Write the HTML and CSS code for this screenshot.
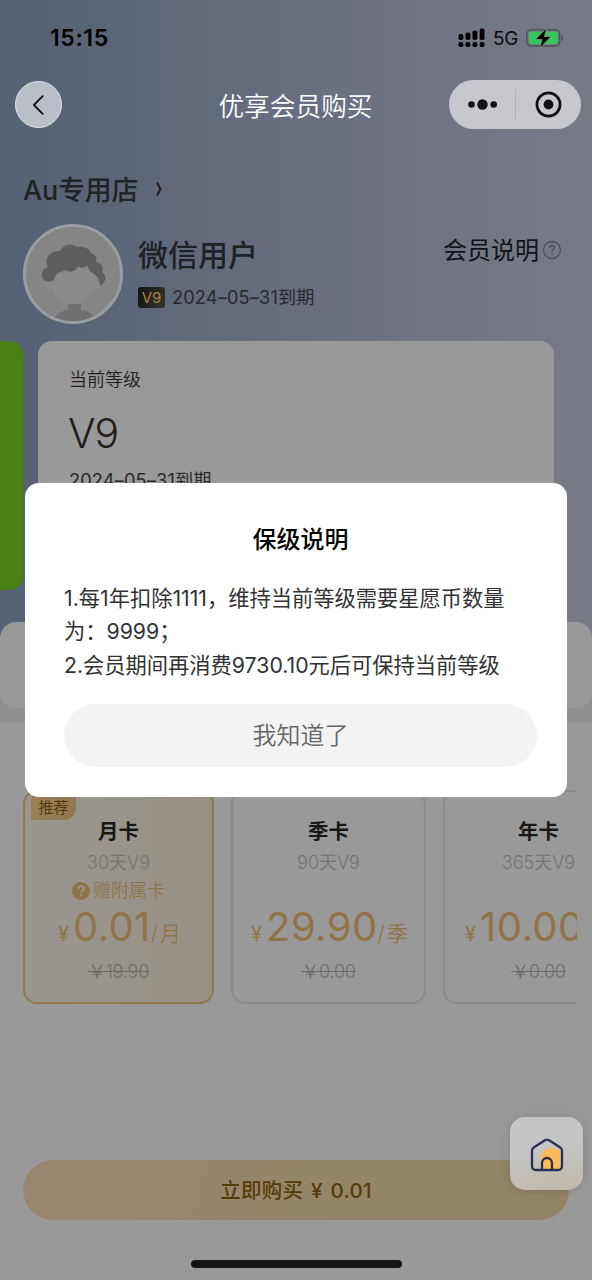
FILE: index.html
```
<!DOCTYPE html>
<html lang="zh-CN">
<head>
<meta charset="utf-8">
<title>优享会员购买</title>
<link rel="stylesheet" href="styles.css">
</head>
<body>
<div class="page">
  <div class="hero">
    <div class="status">
      <span class="clock">15:15</span>
      <div class="status-right">
        <svg class="signal" width="28" height="20" viewBox="0 0 28 20">
          <g fill="#000"><rect x="0.500" y="6" width="4.800" height="6" rx="1.8"/><rect x="7.500" y="4.500" width="4.800" height="7.500" rx="1.8"/><rect x="14.500" y="2.500" width="4.800" height="9.500" rx="1.8"/><rect x="21.700" y="0.500" width="4.800" height="11.500" rx="1.8"/><rect x="0.500" y="14" width="4.800" height="5" rx="1.8"/><rect x="7.500" y="14" width="4.800" height="5" rx="1.8"/><rect x="14.500" y="14" width="4.800" height="5" rx="1.8"/><rect x="21.700" y="14" width="4.800" height="5" rx="1.8"/></g>
        </svg>
        <span class="net">5G</span>
        <svg class="battery" width="38" height="20" viewBox="0 0 38 20">
          <rect x="0.800" y="1.700" width="32.800" height="16.300" rx="4.500" fill="none" stroke="#4e525b" stroke-width="1.500"/>
          <rect x="2.800" y="3.700" width="28.800" height="12.300" rx="2.800" fill="#35c759"/>
          <path d="M35.300 7v6c1.200-.6 2-1.500 2-3s-.8-2.400-2-3z" fill="#4e525b"/>
          <path d="M20 1 10.500 11h6.200l-2.300 8L24 9h-6.200z" fill="#000" stroke="#6c8f76" stroke-width="1.800" paint-order="stroke" stroke-linejoin="round"/>
        </svg>
      </div>
    </div>
    <div class="nav">
      <div class="back"><svg width="46" height="46" viewBox="0 0 46 46"><path d="M27.300 14 18.300 23l9 9" fill="none" stroke="#111" stroke-width="1.900" stroke-linecap="round" stroke-linejoin="round"/></svg></div>
      <div class="title">优享会员购买</div>
      <div class="capsule">
        <svg width="132" height="49" viewBox="0 0 132 49"><g fill="#111"><circle cx="22.500" cy="24.500" r="3.300"/><circle cx="33.500" cy="24.500" r="5.200"/><circle cx="44.700" cy="24.500" r="3.300"/><circle cx="99.500" cy="24.500" r="4.900"/></g><circle cx="99.500" cy="24.500" r="11.600" fill="none" stroke="#111" stroke-width="2.700"/><path d="M66.500 9.500v30" stroke="#aeb0b5"/></svg>
      </div>
    </div>
    <div class="shop"><span>Au专用店</span><svg width="10" height="18" viewBox="0 0 10 18"><path d="M3 2.500Q5 6 6.300 9 5 12 3 15.500" fill="none" stroke="#222" stroke-width="2.100"/></svg></div>
    <div class="user">
      <svg class="avatar" width="100" height="100" viewBox="0 0 100 100">
        <defs><clipPath id="face"><circle cx="50" cy="50" r="47"/></clipPath></defs>
        <circle cx="50" cy="50" r="48.500" fill="#858585" stroke="#9a9da2" stroke-width="3"/>
        <g clip-path="url(#face)">
          <path d="M30 99c2-9 8-12 15-13v-6h13v6c7 1 14 4 16 13z" fill="#707070"/>
          <circle cx="27.500" cy="61" r="4" fill="#8b8b8b"/><circle cx="73" cy="61" r="4" fill="#8b8b8b"/>
          <path d="M29 50h14l20-12 10 12v9c-1 12-10 21-22.500 21S30 71 29 59z" fill="#8b8b8b"/>
          <path d="M31 56c-3 3-9 2-11-1-3-5 0-11 5-12-5-8 2-17 12-16 3-7 12-8 17-4 6-1 12 1 14 6 5 2 6 5 5 9 6 1 8 6 6 10 5 4 4 9 0 12l-2 2c0-7-3-10-6-12-4-2-6-5-7-9-2 3-6 4-9 1-2 6-9 7-12 4-3 1-7 2-9 4-2 2-3 4-3 6z" fill="#5e5e5e"/>
        </g>
      </svg>
      <div class="user-main">
        <div class="name">微信用户</div>
        <div class="expiry"><span class="tag">V9</span><span class="date">2024–05–31到期</span></div>
      </div>
      <div class="explain"><span>会员说明</span><svg width="20" height="20" viewBox="0 0 20 20"><g fill="none" stroke="#4d505a" stroke-width="1.300"><circle cx="10" cy="10" r="8.500"/><path d="M7.500 8.100c0-3.500 5-3.400 5-.5 0 2-2.500 2-2.500 4.200" stroke-width="1.500"/></g><circle cx="10" cy="14" r="0.900" fill="#4d505a"/></svg></div>
    </div>
    <div class="levels">
      <div class="level-prev"></div>
      <div class="level">
        <div class="level-label">当前等级</div>
        <div class="level-name">V9</div>
        <div class="date level-date">2024–05–31到期</div>
      </div>
    </div>
  </div>
  <div class="band"><div class="panel"></div></div>
  <div class="plans">
    <div class="plan active">
      <span class="rec">推荐</span>
      <div class="plan-name">月卡</div>
      <div class="plan-days">30天V9</div>
      <div class="gift"><svg width="18" height="18" viewBox="0 0 18 18"><circle cx="9" cy="9" r="9" fill="#8f7448"/><path d="M6.300 7c0-4 5.600-3.700 5.600-.4 0 2-2.700 2-2.700 4.300" fill="none" stroke="#9d988d" stroke-width="1.700"/><circle cx="9.200" cy="13.300" r="1.100" fill="#9d988d"/></svg>赠附属卡</div>
      <div class="price"><span class="yen">¥</span><span class="num">0.01</span><span class="unit">/月</span></div>
      <div class="was">￥19.90</div>
    </div>
    <div class="plan">
      <div class="plan-name">季卡</div>
      <div class="plan-days">90天V9</div>
      <div class="gift"></div>
      <div class="price"><span class="yen">¥</span><span class="num">29.90</span><span class="unit">/季</span></div>
      <div class="was">￥0.00</div>
    </div>
    <div class="plan">
      <div class="plan-name">年卡</div>
      <div class="plan-days">365天V9</div>
      <div class="gift"></div>
      <div class="price"><span class="yen">¥</span><span class="num">10.00</span><span class="unit">/年</span></div>
      <div class="was">￥0.00</div>
    </div>
  </div>
  <div class="buy">立即购买 ¥ 0.01</div>
  <div class="home-bar"></div>

  <div class="modal">
    <div class="modal-title">保级说明</div>
    <div class="modal-text">
      <div class="l1">1.每1年扣除1111，维持当前等级需要星愿币数量</div>
      <div class="l2">为：9999；</div>
      <div class="l3">2.会员期间再消费9730.10元后可保持当前等级</div>
    </div>
    <div class="ok">我知道了</div>
  </div>
  <div class="home">
    <svg width="36" height="38" viewBox="0 0 36 38"><path d="M12 24c-1-7 4-11 10-11 4 0 6.500 1 9 3V34H14z" fill="#fdb95d"/><path d="M3 15.500Q3 13.500 5 12.200L16 5.200q2-1.300 4 0l11 7q2 1.300 2 3.300V31q0 4-4 4H7q-4 0-4-4zM13 35v-7a5 5 0 0 1 10 0v7" fill="none" stroke="#26324f" stroke-width="2.300" stroke-linejoin="round"/></svg>
  </div>
</div>
</body>
</html>
```
FILE: styles.css
```
* { box-sizing: border-box; }
body { margin: 0; font-family: Inter, "Noto Sans CJK SC", sans-serif; }
.page { position: relative; width: 592px; height: 1280px; overflow: hidden; background: #999; display: flex; flex-direction: column; }
.hero { height: 640px; flex: none; background: linear-gradient(90deg, #556175 0%, #60687a 30%, #6c7182 60%, #787b85 100%); }
.status { height: 76px; padding: 0 28px 0 50px; display: flex; justify-content: space-between; align-items: center; }
.clock { font-size: 23px; font-weight: 600; color: #000; letter-spacing: .6px; }
.status-right { display: flex; align-items: center; }
.net { font-size: 19px; margin: 1px 8px 0 7px; letter-spacing: -.3px; width: 25px; color: #0b0b0c; }
.nav { height: 57px; padding: 0 11px 0 15px; display: flex; justify-content: space-between; align-items: center; }
.back { width: 47px; height: 47px; border-radius: 50%; background: #babec7; border: 1.500px solid #e3e5ea; display: flex; align-items: center; justify-content: center; }
.title { font-size: 25.700px; color: #fff; margin: 4px 0 0 80px; line-height: 36px; white-space: nowrap; font-weight: 350; }
.capsule { width: 132px; height: 49px; border-radius: 25px; background: #c6c8ce; }
.shop { height: 91px; padding: 21px 0 0 23px; font-size: 27px; font-weight: 500; color: #222326; display: flex; align-items: flex-start; }
.shop span { line-height: 74px; margin-right: 16px; letter-spacing: -.2px; }
.shop svg { margin-top: 26px; }
.user { height: 117px; padding-left: 23px; display: flex; }
.avatar { flex: none; }
.user-main { padding: 9px 0 0 15px; width: 320px; }
.name { font-size: 30px; line-height: 44px; font-weight: 500; color: #202124; }
.expiry { display: flex; align-items: center; height: 22px; margin-top: 9px; }
.tag { width: 27px; height: 21px; border-radius: 3px; background: linear-gradient(110deg, #111, #38342f); color: #aa803f; font-size: 15px; line-height: 21px; text-align: center; margin: 0 7px 0 0; }
.date { font-size: 18.200px; line-height: 26px; color: #29292c; white-space: nowrap; letter-spacing: .15px; font-weight: 380; }
.explain { display: flex; align-items: center; height: 34px; margin-top: 8px; font-size: 24px; color: #111216; white-space: nowrap; }
.explain span { margin-top: -1px; }
.explain svg { margin: 2px 0 0 2.500px; }
.levels { display: flex; gap: 15px; height: 249px; }
.level-prev { width: 23px; background: #4a8014; border-radius: 0 14px 14px 0; }
.level { width: 516px; background: #999; border-radius: 14px; padding: 26px 31px; color: #1f1f1f; }
.level-label { font-size: 18px; line-height: 26px; font-weight: 350; }
.level-name { font-size: 41px; line-height: 50px; font-weight: 350; margin: 15px 0 0 -1px; letter-spacing: -1.200px; }
.level-date { margin-top: 9px; }
.band { height: 101px; margin-top: -18px; flex: none; background: linear-gradient(#0000 0 18px, #8f8f8f 18px); }
.panel { height: 86px; border-radius: 16px; background: #999; }
.plans { height: 281px; flex: none; width: 577px; padding: 67px 0 0 23px; overflow: hidden; display: flex; gap: 17px; }
.plan { position: relative; flex: none; width: 195px; height: 214px; border: 2px solid #8b8b8b; border-radius: 14px; padding-top: 25px; text-align: center; }
.plan.active { width: 191px; border: 2px solid #90784f; background: linear-gradient(90deg, #999690, #989389 65%, #968f84); }
.plan:last-child { width: 191px; }
.rec { position: absolute; left: 6px; top: 1px; width: 45px; height: 27px; background: linear-gradient(90deg, #9a8255, #8d7953); border-radius: 8px 0 12px 0; font-size: 15px; line-height: 29px; color: #583509; }
.plan-name { font-size: 20.500px; line-height: 30px; font-weight: 600; color: #181818; }
.plan-days { font-size: 18px; line-height: 26px; margin-top: 3px; font-weight: 350; color: #747474; }
.gift { height: 26px; font-size: 18px; line-height: 26px; color: #8f7448; font-weight: 350; display: flex; gap: 3px; justify-content: center; align-items: center; margin-top: 2px; }
.price { height: 49px; color: #8f7448; display: flex; justify-content: center; align-items: baseline; line-height: 45px; white-space: nowrap; padding-left: 4px; }
.yen { font-size: 20px; font-weight: 380; margin-right: 4px; }
.num { font-size: 40px; font-weight: 380; letter-spacing: .4px; }
.unit { font-size: 21px; font-weight: 350; letter-spacing: 2px; }
.was { font-size: 18px; line-height: 26px; margin-top: 6px; font-weight: 350; color: #6c6c6c; text-decoration: line-through; letter-spacing: -.2px; }
.buy { width: 546px; height: 60px; flex: none; margin: 156px 0 0 23px; border-radius: 30px; background: linear-gradient(105deg, #9a8670, #958569 50%, #928365); color: #583a09; font-size: 20.500px; font-weight: 500; line-height: 62px; text-align: center; word-spacing: 2px; letter-spacing: .3px; }
.home-bar { width: 211px; height: 7.500px; flex: none; margin: 40px 0 0 191px; border-radius: 4px; background: #141414; }
.modal { position: absolute; left: 25px; top: 483px; width: 542px; height: 314px; border-radius: 14px; background: #fff; padding: 39px 30px 30px 39px; }
.modal-title { font-size: 24px; line-height: 36px; font-weight: 500; text-align: center; color: #000; }
.modal-text { margin-top: 24px; font-size: 21.250px; line-height: 33.300px; color: #333; white-space: nowrap; font-weight: 380; }
.ok { height: 63px; margin-top: 22px; border-radius: 32px; background: #f3f3f3; color: #666; font-size: 24px; line-height: 63px; text-align: center; font-weight: 350; }
.home { position: absolute; left: 510px; top: 1117px; width: 73px; height: 73px; border-radius: 15px; background: linear-gradient(170deg, #c5c5c6 0 42%, #c0b8a8); box-shadow: 0 1px 8px #0002; display: flex; justify-content: center; align-items: center; }
```
